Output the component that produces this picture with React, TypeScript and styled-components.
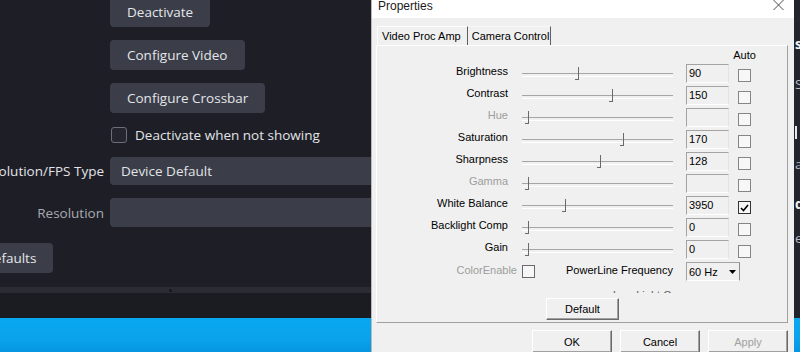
import React from "react";
import styled, { createGlobalStyle } from "styled-components";

const GlobalStyle = createGlobalStyle`
  html, body { margin: 0; padding: 0; background: #1e1f26; }
  body { width: 800px; height: 352px; overflow: hidden; }
  * { box-sizing: border-box; }
`;

/* ---------- OBS background window ---------- */

const Screen = styled.div`
  position: relative;
  width: 800px;
  height: 352px;
  overflow: hidden;
  display: flex;
  flex-direction: column;
  background: #1e1f26;
`;

const ObsWindow = styled.div`
  height: 318px;
  display: flex;
  flex: none;
`;

const PropsPane = styled.div`
  width: 794px;
  flex: none;
  display: flex;
  flex-direction: column;
  overflow: hidden;
  font-family: "Open Sans", "Noto Sans", sans-serif;
  font-size: 13.5px;
  color: #e2e3e8;
  background: #1e1f26;
`;

const FormArea = styled.div`
  height: 287px;
  margin-left: -46px;
  display: flex;
  flex-direction: column;
  align-items: flex-start;
`;

const FormGrid = styled.div`
  display: grid;
  grid-template-columns: 150px 640px;
  column-gap: 6px;
  row-gap: 13px;
  margin-top: -3px;
`;

const ObsButton = styled.button`
  grid-column: 2;
  justify-self: start;
  height: 30px;
  padding: 0 17px;
  border: none;
  border-radius: 4px;
  background: #3b3e48;
  color: #e4e5ea;
  font: inherit;
  line-height: 30px;
  white-space: nowrap;
`;

const DefaultsButton = styled(ObsButton)`
  margin-top: 16px;
  margin-left: 13px;
`;

const CheckRow = styled.label`
  grid-column: 2;
  height: 18px;
  display: flex;
  align-items: center;
  gap: 8px;
  padding-left: 1px;
  white-space: nowrap;
`;

const ObsCheck = styled.span`
  width: 16px;
  height: 16px;
  border: 1px solid #6c6f7a;
  border-radius: 3px;
  background: #24252d;
`;

const ObsLabel = styled.div<{ $dim?: boolean }>`
  grid-column: 1;
  align-self: center;
  text-align: right;
  white-space: nowrap;
  color: ${(p) => (p.$dim ? "#a9aab2" : "#e2e3e8")};
`;

const ObsField = styled.div<{ $h: number }>`
  grid-column: 2;
  height: ${(p) => p.$h}px;
  border-radius: 4px;
  background: #3b3e48;
  display: flex;
  align-items: center;
  padding-left: 11px;
  white-space: nowrap;
`;

const Splitter = styled.div`
  height: 6px;
  flex: none;
  background: #2a2c34;
  display: flex;
  align-items: center;
`;

const SplitterDot = styled.span`
  width: 3px;
  height: 3px;
  margin-left: 169px;
  border-radius: 50%;
  background: #17181d;
`;

const PaneFoot = styled.div`
  flex: 1;
  background: #1b1c21;
`;

const SideStrip = styled.div`
  width: 6px;
  flex: none;
  overflow: hidden;
  background: #23252d;
  display: flex;
  flex-direction: column;
  padding-top: 34px;
  font-family: "Open Sans", "Noto Sans", sans-serif;
  font-size: 13.5px;
`;

const SideGlyph = styled.div<{ $h: number; $bright?: boolean }>`
  height: ${(p) => p.$h}px;
  line-height: 20px;
  padding-left: 1px;
  color: ${(p) => (p.$bright ? "#f2f2f5" : "#b9bac2")};
  font-weight: ${(p) => (p.$bright ? 700 : 400)};
`;

const SideBar = styled.div<{ $h: number }>`
  height: ${(p) => p.$h}px;
  display: flex;
  align-items: center;
  padding-left: 1px;
  &::before {
    content: "";
    width: 2px;
    height: 13px;
    background: #e8e8ee;
  }
`;

const Desktop = styled.div`
  flex: 1;
  background: linear-gradient(180deg, #08a8f0 0%, #0aa3ec 60%, #0596e0 100%);
`;

/* ---------- Properties dialog (window over the desktop) ---------- */

const Dialog = styled.div`
  position: absolute;
  left: 371px;
  top: 0;
  width: 423px;
  height: 360px;
  background: #f0f0f0;
  border-left: 1px solid #b9b9b9;
  font-family: "Liberation Sans", Arial, sans-serif;
  font-size: 11px;
  color: #000;
  display: flex;
  flex-direction: column;
`;

const TitleBar = styled.div`
  height: 18px;
  flex: none;
  background: #fff;
  display: flex;
  justify-content: space-between;
  align-items: flex-start;
  padding: 0 10px 0 6px;
`;

const Title = styled.span`
  font-size: 12px;
  line-height: 12px;
  color: #1a1a1a;
`;

const DialogBody = styled.div`
  flex: 1;
  display: flex;
  flex-direction: column;
  padding: 8px 6px 0 4px;
`;

const TabStrip = styled.div`
  height: 19px;
  display: flex;
  padding-left: 1px;
`;

const Tab = styled.div<{ $active?: boolean; $pl: number; $pr: number }>`
  display: flex;
  align-items: center;
  padding: 0 ${(p) => p.$pr}px 0 ${(p) => p.$pl}px;
  border-top: 1px solid ${(p) => (p.$active ? "#ffffff" : "#f8f8f8")};
  border-left: 1px solid ${(p) => (p.$active ? "#ffffff" : "transparent")};
  border-right: 1px solid #5e5e5e;
  white-space: nowrap;
`;

const TabPage = styled.div`
  height: 278px;
  flex: none;
  border: 1px solid;
  border-color: #ffffff #a0a0a0 #a0a0a0 #ffffff;
  padding-top: 3px;
  display: flex;
  flex-direction: column;
`;

/* columns: label | gap | slider | gap | edit | gap | auto */
const ControlGrid = styled.div`
  display: grid;
  grid-template-columns: 131px 14px 151px 13px 43px 9px 13px;
  grid-template-rows: 13px;
  grid-auto-rows: 22px;
`;

const AutoHeader = styled.div`
  grid-column: 7;
  justify-self: center;
  line-height: 13px;
  white-space: nowrap;
`;

const RowLabel = styled.div<{ $disabled?: boolean }>`
  grid-column: 1;
  align-self: start;
  margin-top: 3px;
  line-height: 13px;
  text-align: right;
  white-space: nowrap;
  color: ${(p) => (p.$disabled ? "#9d9d9d" : "#000")};
`;

const Slider = styled.div`
  grid-column: 3;
  position: relative;
  &::before {
    content: "";
    position: absolute;
    left: 0;
    right: 0;
    top: 11px;
    height: 2px;
    border-top: 1px solid #a6a6a6;
    border-bottom: 1px solid #ffffff;
  }
`;

const Thumb = styled.span`
  position: absolute;
  top: 5px;
  width: 4px;
  height: 13px;
  border-right: 1px solid #6a6a6a;
  border-bottom: 1px solid #6a6a6a;
`;

const EditBox = styled.div`
  grid-column: 5;
  height: 19px;
  margin-top: 2px;
  border: 1px solid;
  border-color: #a3a3a3 #e3e3e3 #ffffff #a3a3a3;
  padding-left: 2px;
  line-height: 17px;
  white-space: nowrap;
`;

const AutoBox = styled.span<{ $checked?: boolean }>`
  grid-column: 7;
  width: 13px;
  height: 13px;
  margin-top: 7px;
  border: 1px solid ${(p) => (p.$checked ? "#333" : "#858585")};
  background: #f7f7f7;
  display: flex;
  align-items: center;
  justify-content: center;
`;

const BottomRow = styled.div`
  grid-column: 1 / 4;
  display: flex;
  align-items: flex-start;
`;

const ColorEnableCell = styled.div`
  width: 145px;
  display: flex;
  justify-content: flex-end;
  padding-right: 5px;
  margin-top: 4px;
  line-height: 13px;
  color: #9d9d9d;
  white-space: nowrap;
`;

const PlainBox = styled.span`
  width: 13px;
  height: 13px;
  margin-top: 5px;
  border: 1px solid #6a6a6a;
  background: #f7f7f7;
`;

const PowerLineLabel = styled.div`
  flex: 1;
  text-align: right;
  margin-top: 4px;
  line-height: 13px;
  white-space: nowrap;
`;

const Combo = styled.div`
  grid-column: 5 / 8;
  justify-self: start;
  width: 54px;
  height: 19px;
  margin-top: 2px;
  border: 1px solid;
  border-color: #a3a3a3 #8a8a8a #ffffff #a3a3a3;
  display: flex;
  align-items: center;
  padding-left: 2px;
  white-space: nowrap;
`;

const ComboText = styled.span`
  flex: 1;
`;

const ComboArrow = styled.span`
  width: 13px;
  display: flex;
  justify-content: center;
`;

const ClippedRow = styled.div`
  height: 2px;
  margin-top: 9px;
  margin-left: 236px;
  width: 62px;
  overflow: hidden;
`;

const ClippedText = styled.div`
  margin-top: -2px;
  line-height: 13px;
  white-space: nowrap;
  color: #5c5c5c;
`;

const ClassicButton = styled.button<{ $disabled?: boolean }>`
  height: 23px;
  padding: 0;
  border: 1px solid;
  border-color: #ffffff #6a6a6a #6a6a6a #ffffff;
  box-shadow: inset -1px -1px 0 #a0a0a0;
  background: #f0f0f0;
  font: inherit;
  color: ${(p) => (p.$disabled ? "#a0a0a0" : "#000")};
`;

const DefaultButton = styled(ClassicButton)`
  width: 73px;
  height: 22px;
  margin-top: 5px;
  align-self: center;
  margin-left: 1px;
`;

const ButtonRow = styled.div`
  display: flex;
  justify-content: flex-end;
  gap: 8px;
  margin-top: 7px;
`;

const DialogButton = styled(ClassicButton)`
  width: 80px;
`;

/* ---------- data ---------- */

type Ctl = {
  label: string;
  value?: number;
  min: number;
  max: number;
  auto?: boolean;
  disabled?: boolean;
};

const controls: Ctl[] = [
  { label: "Brightness", value: 90, min: 0, max: 255 },
  { label: "Contrast", value: 150, min: 0, max: 255 },
  { label: "Hue", min: 0, max: 255, disabled: true },
  { label: "Saturation", value: 170, min: 0, max: 255 },
  { label: "Sharpness", value: 128, min: 0, max: 255 },
  { label: "Gamma", min: 0, max: 255, disabled: true },
  { label: "White Balance", value: 3950, min: 2800, max: 7300, auto: true },
  { label: "Backlight Comp", value: 0, min: 0, max: 2 },
  { label: "Gain", value: 0, min: 0, max: 255 },
];

const sideGlyphs: { ch: string; h: number; bright?: boolean; bar?: boolean }[] = [
  { ch: "s", h: 40, bright: true },
  { ch: "S", h: 36 },
  { ch: "", h: 44, bar: true },
  { ch: "a", h: 40 },
  { ch: "d", h: 34, bright: true },
  { ch: "e", h: 34 },
];

const CloseIcon = () => (
  <svg width="11" height="10" viewBox="0 0 11 10">
    <path d="M0.5 0 L10.5 10 M10.5 0 L0.5 10" stroke="#4a4a4a" strokeWidth="1" fill="none" />
  </svg>
);

const CheckIcon = () => (
  <svg width="9" height="8" viewBox="0 0 9 8">
    <path d="M1 4 L3.5 6.5 L8 1" stroke="#000" strokeWidth="1.6" fill="none" />
  </svg>
);

const DownArrow = () => (
  <svg width="7" height="4" viewBox="0 0 7 4">
    <path d="M0 0 H7 L3.5 4 Z" fill="#000" />
  </svg>
);

export default function App() {
  return (
    <>
      <GlobalStyle />
      <Screen>
        <ObsWindow>
          <PropsPane>
            <FormArea>
              <FormGrid>
                <ObsButton>Deactivate</ObsButton>
                <ObsButton>Configure Video</ObsButton>
                <ObsButton>Configure Crossbar</ObsButton>
                <CheckRow>
                  <ObsCheck />
                  Deactivate when not showing
                </CheckRow>
                <ObsLabel>Resolution/FPS Type</ObsLabel>
                <ObsField $h={28}>Device Default</ObsField>
                <ObsLabel $dim>Resolution</ObsLabel>
                <ObsField $h={29} />
              </FormGrid>
              <DefaultsButton>Defaults</DefaultsButton>
            </FormArea>
            <Splitter>
              <SplitterDot />
            </Splitter>
            <PaneFoot />
          </PropsPane>
          <SideStrip>
            {sideGlyphs.map((g, i) =>
              g.bar ? (
                <SideBar key={i} $h={g.h} />
              ) : (
                <SideGlyph key={i} $h={g.h} $bright={g.bright}>
                  {g.ch}
                </SideGlyph>
              )
            )}
          </SideStrip>
        </ObsWindow>
        <Desktop />

        <Dialog>
          <TitleBar>
            <Title>Properties</Title>
            <CloseIcon />
          </TitleBar>
          <DialogBody>
            <TabStrip>
              <Tab $active $pl={4} $pr={6}>
                Video Proc Amp
              </Tab>
              <Tab $pl={3} $pr={1}>
                Camera Control
              </Tab>
            </TabStrip>
            <TabPage>
              <ControlGrid>
                <AutoHeader>Auto</AutoHeader>
                {controls.map((c) => {
                  const frac = c.value === undefined ? 0 : (c.value - c.min) / (c.max - c.min);
                  const x = 6 + frac * 143 - 3;
                  return (
                    <React.Fragment key={c.label}>
                      <RowLabel $disabled={c.disabled}>{c.label}</RowLabel>
                      <Slider>
                        <Thumb style={{ left: `${x}px` }} />
                      </Slider>
                      <EditBox>{c.value ?? ""}</EditBox>
                      <AutoBox $checked={c.auto}>{c.auto && <CheckIcon />}</AutoBox>
                    </React.Fragment>
                  );
                })}
                <BottomRow>
                  <ColorEnableCell>ColorEnable</ColorEnableCell>
                  <PlainBox />
                  <PowerLineLabel>PowerLine Frequency</PowerLineLabel>
                </BottomRow>
                <Combo>
                  <ComboText>60 Hz</ComboText>
                  <ComboArrow>
                    <DownArrow />
                  </ComboArrow>
                </Combo>
              </ControlGrid>
              <ClippedRow>
                <ClippedText>Low Light Compensation</ClippedText>
              </ClippedRow>
              <DefaultButton>Default</DefaultButton>
            </TabPage>
            <ButtonRow>
              <DialogButton>OK</DialogButton>
              <DialogButton>Cancel</DialogButton>
              <DialogButton $disabled>Apply</DialogButton>
            </ButtonRow>
          </DialogBody>
        </Dialog>
      </Screen>
    </>
  );
}
